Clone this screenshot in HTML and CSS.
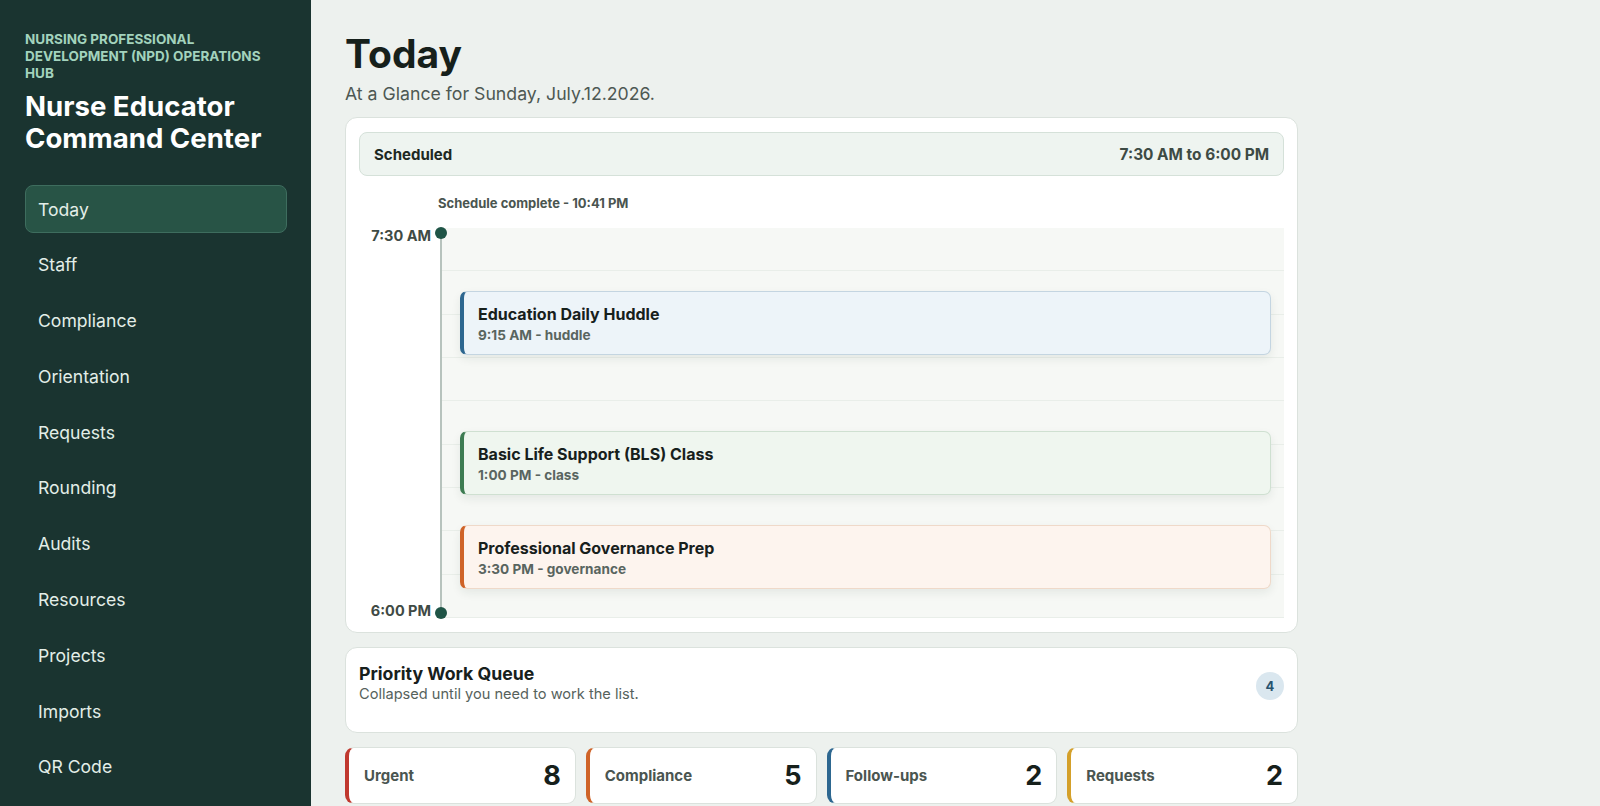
FILE: index.html
```html
<!DOCTYPE html>
<html lang="en">
  <head>
    <meta charset="UTF-8" />
    <title>Nurse Educator Command Center</title>
    <link rel="stylesheet" href="styles.css">
  </head>
  <body>
    <aside class="sidebar">
      <div class="eyebrow">Nursing Professional Development (NPD) Operations Hub</div>
      <h1 class="brand">Nurse Educator Command Center</h1>
      <nav class="nav">
        <a class="nav-item active">Today</a>
        <a class="nav-item">Staff</a>
        <a class="nav-item">Compliance</a>
        <a class="nav-item">Orientation</a>
        <a class="nav-item">Requests</a>
        <a class="nav-item">Rounding</a>
        <a class="nav-item">Audits</a>
        <a class="nav-item">Resources</a>
        <a class="nav-item">Projects</a>
        <a class="nav-item">Imports</a>
        <a class="nav-item">QR Code</a>
      </nav>
    </aside>

    <main class="main">
      <h2 class="page-title">Today</h2>
      <p class="page-sub">At a Glance for Sunday, July.12.2026.</p>

      <section class="card schedule">
        <div class="schedule-head">
          <span>Scheduled</span>
          <span class="range">7:30 AM to 6:00 PM</span>
        </div>
        <div class="schedule-note">Schedule complete - 10:41 PM</div>
        <div class="timeline">
          <div class="time-col">
            <span class="time">7:30 AM</span>
            <span class="time">6:00 PM</span>
          </div>
          <div class="rail">
            <span class="dot top"></span>
            <span class="dot bottom"></span>
          </div>
          <div class="grid">
            <div class="slot"></div>
            <div class="slot"></div>
            <div class="slot"></div>
            <div class="slot"></div>
            <div class="slot"></div>
            <div class="slot"></div>
            <div class="slot"></div>
            <div class="slot"></div>
            <div class="slot"></div>

            <div class="event huddle" style="top: 63px">
              <div class="event-title">Education Daily Huddle</div>
              <div class="event-meta">9:15 AM - huddle</div>
            </div>
            <div class="event class" style="top: 203px">
              <div class="event-title">Basic Life Support (BLS) Class</div>
              <div class="event-meta">1:00 PM - class</div>
            </div>
            <div class="event governance" style="top: 297px">
              <div class="event-title">Professional Governance Prep</div>
              <div class="event-meta">3:30 PM - governance</div>
            </div>
          </div>
        </div>
      </section>

      <section class="card queue">
        <div>
          <h3 class="queue-title">Priority Work Queue</h3>
          <p class="queue-sub">Collapsed until you need to work the list.</p>
        </div>
        <span class="badge">4</span>
      </section>

      <div class="stats">
        <div class="stat urgent"><span class="stat-label">Urgent</span><span class="stat-num">8</span></div>
        <div class="stat compliance"><span class="stat-label">Compliance</span><span class="stat-num">5</span></div>
        <div class="stat followups"><span class="stat-label">Follow-ups</span><span class="stat-num">2</span></div>
        <div class="stat requests"><span class="stat-label">Requests</span><span class="stat-num">2</span></div>
      </div>
    </main>
  </body>
</html>
```

FILE: styles.css
```css
* {
  box-sizing: border-box;
}
html,
body {
  margin: 0;
  height: 100%;
  overflow: hidden;
}
body {
  font-family: Inter, "Noto Sans", sans-serif;
  display: flex;
  background-color: #edf1ee;
  color: #17201c;
}

/* sidebar */
.sidebar {
  width: 311px;
  flex-shrink: 0;
  background-color: #1a3430;
  padding: 31px 28px 0 25px;
}
.eyebrow {
  font-size: 13.5px;
  line-height: 17px;
  font-weight: 700;
  text-transform: uppercase;
  color: #a3d3bd;
}
.brand {
  margin: 8px 0 0;
  font-size: 27.6px;
  line-height: 32px;
  font-weight: 700;
  color: #ffffff;
}
.nav {
  display: flex;
  flex-direction: column;
  gap: 7.8px;
  margin-top: 31px;
  width: 262px;
}
.nav-item {
  display: flex;
  align-items: center;
  height: 48px;
  padding: 0 12px;
  font-size: 17.6px;
  color: #e3eee8;
  border: 1px solid transparent;
  border-radius: 8px;
}
.nav-item.active {
  background-color: #285446;
  border-color: #3e6d5e;
}

/* main */
.main {
  flex: 1;
  padding: 28px 0 0 34px;
}
.main > * {
  width: 953px;
}
.page-title {
  margin: 0;
  font-size: 39px;
  line-height: 52px;
  font-weight: 700;
  color: #16201b;
}
.page-sub {
  margin: 2px 0 0;
  font-size: 17.7px;
  line-height: 24px;
  color: #4d5853;
}
.card {
  background-color: #ffffff;
  border: 1px solid #dbe2dd;
  border-radius: 12px;
}

.schedule {
  margin-top: 11px;
  padding: 14px 13px 14px 13px;
}
.schedule-head {
  display: flex;
  justify-content: space-between;
  align-items: center;
  height: 44px;
  padding: 0 14px;
  background-color: #eef4f0;
  border: 1px solid #d5e1d9;
  border-radius: 8px;
  font-size: 15px;
  font-weight: 700;
  color: #1d2823;
}
.schedule-head .range {
  font-size: 15.4px;
  color: #3d4a44;
}
.schedule-note {
  margin: 19px 0 0 79px;
  font-size: 13px;
  font-weight: 700;
  color: #4a5550;
}
.timeline {
  display: flex;
  margin-top: 17px;
  height: 390px;
}
.time-col {
  width: 72px;
  display: flex;
  flex-direction: column;
  justify-content: space-between;
  align-items: flex-end;
  margin: -1px 0 -2px;
}
.time {
  font-size: 14.5px;
  line-height: 18px;
  font-weight: 700;
  color: #3f4b45;
}
.rail {
  position: relative;
  z-index: 2;
  width: 2px;
  margin-left: 9px;
  background-color: #b7c3bd;
  margin-top: 5px;
  margin-bottom: 5px;
}
.dot {
  position: absolute;
  left: -5px;
  width: 12px;
  height: 12px;
  border-radius: 50%;
  background-color: #1f5446;
}
.dot.top {
  top: -6px;
}
.dot.bottom {
  bottom: -6px;
}
.grid {
  position: relative;
  flex: 1;
  background-color: #f6f8f5;
  display: flex;
  flex-direction: column;
}
.slot {
  height: 44.5px;
  border-bottom: 1px solid #e9eee9;
}
.event {
  position: absolute;
  left: 18px;
  right: 13px;
  height: 64px;
  padding: 12px 14px 0;
  border: 1px solid;
  border-left-width: 4px;
  border-radius: 7px;
  box-shadow: 0 4px 10px rgba(30, 50, 40, 0.08);
}
.event-title {
  font-size: 16px;
  line-height: 20px;
  font-weight: 700;
  color: #17201c;
}
.event-meta {
  margin-top: 2px;
  font-size: 13.6px;
  line-height: 18px;
  font-weight: 700;
  color: #59655f;
}
.event.huddle {
  background-color: #edf4f9;
  border-color: #c4d5e1;
  border-left-color: #2d6790;
}
.event.class {
  background-color: #eff6ef;
  border-color: #cfe0d1;
  border-left-color: #3d7c52;
}
.event.governance {
  background-color: #fdf4ee;
  border-color: #efd9c9;
  border-left-color: #cf6328;
}

.queue {
  margin-top: 14px;
  height: 86px;
  padding: 15px 13px 0;
  display: flex;
  justify-content: space-between;
  align-items: flex-start;
}
.queue-title {
  margin: 0;
  font-size: 17.7px;
  line-height: 22px;
  font-weight: 700;
  color: #17201c;
}
.queue-sub {
  margin: 0;
  font-size: 14.6px;
  line-height: 18px;
  color: #56625c;
}
.badge {
  margin-top: 9px;
  width: 28px;
  height: 28px;
  border-radius: 50%;
  display: flex;
  align-items: center;
  justify-content: center;
  background-color: #dae7ef;
  color: #27536f;
  font-size: 13px;
  font-weight: 700;
}

.stats {
  margin-top: 14px;
  display: grid;
  grid-template-columns: repeat(4, 1fr);
  gap: 10px;
}
.stat {
  height: 57px;
  display: flex;
  justify-content: space-between;
  align-items: center;
  padding: 0 14px 0 15px;
  background-color: #ffffff;
  border: 1px solid #dbe2dd;
  border-left: 4px solid;
  border-radius: 9px;
}
.stat-label {
  font-size: 15px;
  font-weight: 700;
  color: #4a5550;
}
.stat-num {
  font-size: 27px;
  font-weight: 700;
  color: #16201b;
}
.stat.urgent {
  border-left-color: #c0392f;
}
.stat.compliance {
  border-left-color: #cf6328;
}
.stat.followups {
  border-left-color: #2d6790;
}
.stat.requests {
  border-left-color: #d4a02a;
}
```
